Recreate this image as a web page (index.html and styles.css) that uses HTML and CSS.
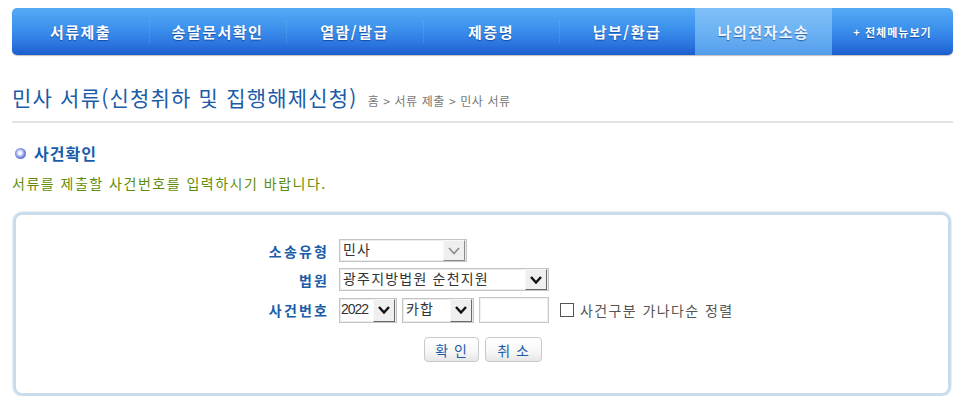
FILE: index.html
```html
<!DOCTYPE html>
<html lang="ko">
<head>
<meta charset="utf-8">
<title>민사 서류</title>
<link rel="stylesheet" href="styles.css">
</head>
<body>
<nav class="gnb">
  <a class="gnb-item">서류제출</a>
  <a class="gnb-item">송달문서확인</a>
  <a class="gnb-item">열람/발급</a>
  <a class="gnb-item narrow">제증명</a>
  <a class="gnb-item narrow">납부/환급</a>
  <a class="gnb-item active">나의전자소송</a>
  <a class="gnb-item all">+ 전체메뉴보기</a>
</nav>

<div class="title-row">
  <h1 class="page-title">민사 서류(신청취하 및 집행해제신청)</h1>
  <span class="crumbs">홈 &gt; 서류 제출 &gt; 민사 서류</span>
</div>

<h2 class="sec-title"><span class="bullet"></span>사건확인</h2>
<p class="guide">서류를 제출할 사건번호를 입력하시기 바랍니다.</p>

<div class="panel">
  <div class="form">
    <label class="lbl">소송유형</label>
    <div class="fields">
      <div class="sel w128 disabled"><span class="val">민사</span><span class="arr"><svg viewBox="0 0 12 8" width="12" height="8"><path d="M1 1 L6 6.5 L11 1" fill="none" stroke="currentColor" stroke-width="1.6"/></svg></span></div>
    </div>
    <label class="lbl">법원</label>
    <div class="fields">
      <div class="sel w210"><span class="val">광주지방법원 순천지원</span><span class="arr"><svg viewBox="0 0 12 8" width="12" height="8"><path d="M1 1 L6 6.5 L11 1" fill="none" stroke="currentColor" stroke-width="2.4"/></svg></span></div>
    </div>
    <label class="lbl">사건번호</label>
    <div class="fields">
      <div class="sel w58 tall"><span class="val num">2022</span><span class="arr"><svg viewBox="0 0 12 8" width="12" height="8"><path d="M1 1 L6 6.5 L11 1" fill="none" stroke="currentColor" stroke-width="2.4"/></svg></span></div>
      <div class="sel w72 tall"><span class="val">카합</span><span class="arr"><svg viewBox="0 0 12 8" width="12" height="8"><path d="M1 1 L6 6.5 L11 1" fill="none" stroke="currentColor" stroke-width="2.4"/></svg></span></div>
      <input class="txt" type="text">
      <label class="chk"><span class="box"></span>사건구분 가나다순 정렬</label>
    </div>
  </div>
  <div class="btns">
    <button class="btn">확 인</button>
    <button class="btn">취 소</button>
  </div>
</div>
</body>
</html>
```
FILE: styles.css
```css
* { box-sizing: border-box; }
body {
  margin: 0;
  padding: 8px 12px 0 12px;
  background: #fff;
  font-family: "Noto Sans CJK KR", "Noto Sans", sans-serif;
  color: #333;
}
.gnb {
  display: flex;
  height: 47px;
  width: 941px;
  border-radius: 5px;
  background: linear-gradient(#55aaf6 0%, #3b90ec 45%, #2a72de 80%, #1d5ccd 100%);
  box-shadow: 0 1px 1px rgba(0,0,0,0.25);
  overflow: hidden;
}
.gnb-item {
  width: 137px;
  display: flex;
  align-items: center;
  justify-content: center;
  color: #fff;
  font-weight: bold;
  font-size: 15px;
  letter-spacing: 1.5px;
  text-shadow: 0 1px 1px rgba(0,40,110,0.55);
  position: relative;
}
.gnb-item.narrow { width: 136px; }
.gnb-item + .gnb-item::before {
  content: "";
  position: absolute;
  left: 0;
  top: 13px;
  height: 22px;
  border-left: 1px dotted rgba(150,195,245,0.35);
}
.gnb-item.active {
  background: linear-gradient(#80c0f8 0%, #6cb2f4 50%, #539deb 100%);
  color: #eef6ff;
}
.gnb-item.active::before, .gnb-item.all::before { display: none; }
.gnb-item.all {
  width: 121px;
  font-size: 11px;
  letter-spacing: 1px;
}

.title-row {
  display: flex;
  align-items: baseline;
  margin-top: 28px;
  padding-bottom: 10px;
  border-bottom: 2px solid #e3e3e3;
  width: 941px;
}
.page-title {
  margin: 0;
  font-size: 21px;
  line-height: 28px;
  font-weight: normal;
  color: #1a5ca8;
  letter-spacing: 1.2px;
}
.crumbs {
  margin-left: 10px;
  font-size: 12px;
  color: #777;
  letter-spacing: 0.6px;
}
.sec-title {
  display: flex;
  align-items: center;
  margin: 19px 0 0 3px;
  font-size: 16px;
  line-height: 22px;
  font-weight: bold;
  color: #1a5ca8;
  letter-spacing: 1px;
}
.bullet {
  width: 11px;
  height: 11px;
  border-radius: 50%;
  margin-right: 8px;
  background: radial-gradient(circle at 45% 45%, #ffffff 0%, #eef2ff 20%, #7d92e4 52%, #3f57c0 85%, #6b7fd0 100%);
}
.guide {
  margin: 10px 0 0 0;
  font-size: 14px;
  line-height: 18px;
  color: #5f8d0a;
  letter-spacing: 1.5px;
}

.panel {
  margin: 20px 0 0 1px;
  width: 938px;
  height: 184px;
  border: 3px solid #c9dcec;
  border-radius: 9px;
  box-shadow: 0 0 0 1px #e8f0f7;
  padding-top: 24px;
}
.form {
  display: grid;
  grid-template-columns: 80px auto;
  column-gap: 12px;
  row-gap: 6px;
  margin-left: 231px;
  align-items: center;
}
.lbl {
  text-align: right;
  font-size: 14px;
  font-weight: bold;
  color: #1a5ca8;
  letter-spacing: 2.2px;
  margin-right: -2.2px;
}
.fields {
  display: flex;
  align-items: center;
  gap: 5px;
}
.sel {
  display: flex;
  height: 23px;
  border: 1px solid #c4c4c4;
  box-shadow: inset 0 0 0 1px #ececec;
  background: #fff;
}
.sel.tall { height: 25px; }
.w128 { width: 128px; }
.w210 { width: 210px; }
.w58 { width: 58px; }
.w72 { width: 72px; }
.val {
  flex: 1;
  font-size: 14px;
  line-height: 18px;
  padding-left: 3px;
  color: #333;
  letter-spacing: 1.2px;
  overflow: hidden;
  white-space: nowrap;
}
.val.num { letter-spacing: -1px; padding-left: 1px; font-family: "Liberation Sans", sans-serif; font-size: 14px; line-height: 20px; }
.arr {
  width: 22px;
  display: flex;
  align-items: center;
  justify-content: center;
  background: #efefef;
  border-left: 1px solid #f8f8f8;
  border-top: 1px solid #f8f8f8;
  border-right: 1px solid #6a6a6a;
  border-bottom: 1px solid #6a6a6a;
  color: #111;
  margin: 0 1px 0 0;
}
.disabled .arr { color: #8a8a8a; border-right-color: #8a8a8a; border-bottom-color: #8a8a8a; }
.txt {
  width: 70px;
  height: 26px;
  border: 1px solid #c8c8c8;
  box-shadow: inset 0 0 0 1px #f0f0f0;
  margin: 0;
}
.chk {
  display: flex;
  align-items: center;
  margin-left: 6px;
  font-size: 14px;
  color: #555;
  letter-spacing: 1.4px;
}
.chk .box {
  width: 14px;
  height: 14px;
  border: 1px solid #555;
  background: #fff;
  margin-right: 6px;
}
.btns {
  display: flex;
  justify-content: center;
  gap: 6px;
  margin-top: 14px;
  padding-left: 2px;
}
.btn {
  width: 55px;
  height: 25px;
  border: 1px solid #c9c9c9;
  border-radius: 4px;
  background: linear-gradient(#ffffff 0%, #f7f7f7 60%, #e6e6e6 100%);
  font-family: "Noto Sans CJK KR", sans-serif;
  font-size: 14px;
  color: #1a5ca8;
  letter-spacing: 1px;
  padding: 0;
}
.btn + .btn { width: 57px; }
```
